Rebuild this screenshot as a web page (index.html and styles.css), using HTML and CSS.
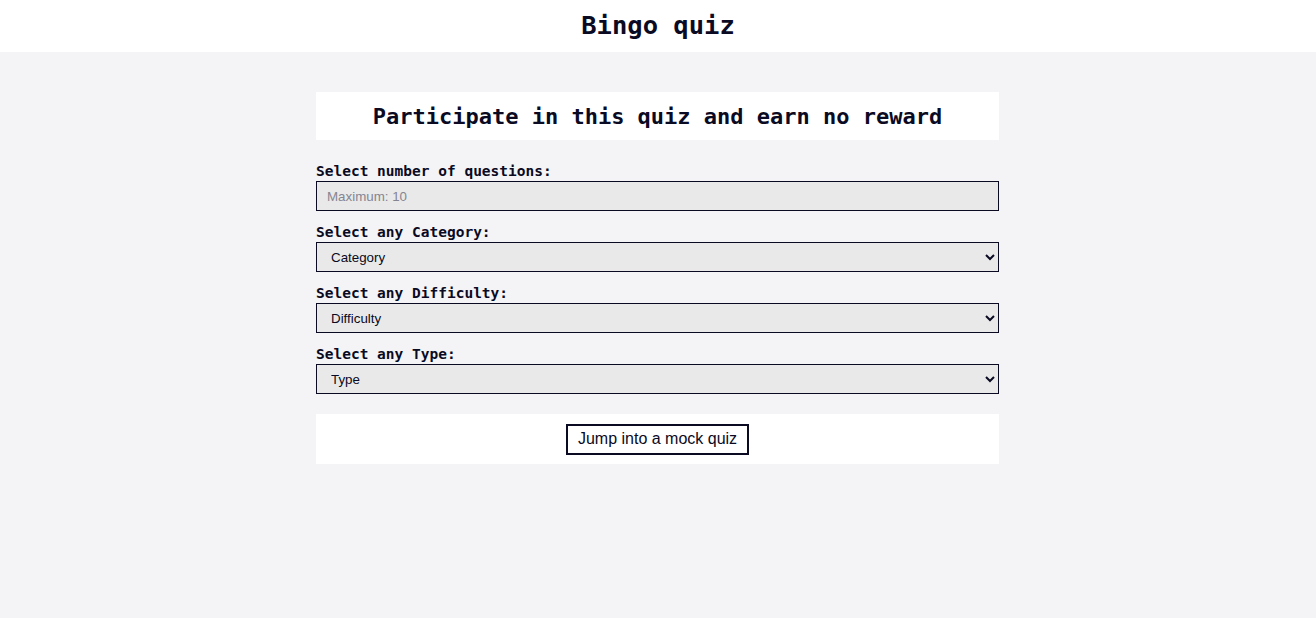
FILE: index.html
```html
<!DOCTYPE html>
<html lang="en">
<head>
<meta charset="utf-8">
<title>Bingo quiz</title>
<link rel="stylesheet" href="styles.css">
</head>
<body>
<header class="top">
  <h1 class="title">Bingo quiz</h1>
</header>
<main class="wrap">
  <form class="quiz">
    <h2 class="intro">Participate in this quiz and earn no reward</h2>
    <div class="field">
      <label class="lbl" for="num">Select number of questions:</label>
      <input class="ctrl input" id="num" type="number" placeholder="Maximum: 10">
    </div>
    <div class="field">
      <label class="lbl" for="cat">Select any Category:</label>
      <select class="ctrl sel" id="cat"><option>Category</option></select>
    </div>
    <div class="field">
      <label class="lbl" for="dif">Select any Difficulty:</label>
      <select class="ctrl sel" id="dif"><option>Difficulty</option></select>
    </div>
    <div class="field">
      <label class="lbl" for="typ">Select any Type:</label>
      <select class="ctrl sel" id="typ"><option>Type</option></select>
    </div>
    <div class="actions">
      <button class="btn" type="button">Jump into a mock quiz</button>
    </div>
  </form>
</main>
</body>
</html>
```
FILE: styles.css
```css
* { box-sizing: border-box; }
html, body { margin: 0; padding: 0; }
body {
  background: #f4f4f6;
  color: #0a0a23;
  font-family: "DejaVu Sans Mono", "Liberation Mono", monospace;
  min-height: 618px;
}
.top {
  background: #ffffff;
  height: 52px;
  display: flex;
  align-items: center;
  justify-content: center;
}
.title {
  margin: 0;
  font-size: 25.5px;
  font-weight: bold;
  line-height: 1;
}
.wrap {
  display: flex;
  justify-content: center;
  padding-top: 40px;
  padding-right: 1px;
}
.quiz {
  width: 683px;
  display: flex;
  flex-direction: column;
}
.intro {
  margin: 0 0 10px;
  background: #ffffff;
  height: 48px;
  display: flex;
  align-items: center;
  justify-content: center;
  font-size: 22px;
  font-weight: bold;
}
.field {
  display: flex;
  flex-direction: column;
  margin-top: 12px;
}
.lbl {
  font-size: 14.5px;
  font-weight: bold;
  line-height: 19px;
  height: 19px;
}
.ctrl {
  width: 100%;
  height: 30px;
  margin: 0;
  border: 1px solid #0a0a23;
  border-radius: 0;
  background-color: #e9e9e9;
  color: #0a0a23;
  font-family: "Liberation Sans", Arial, sans-serif;
}
.input {
  font-size: 13.33px;
  padding: 0 10px;
}
.input::placeholder { color: #858591; }
.sel {
  font-size: 13.33px;
  padding: 0 10px;
}
.actions {
  margin-top: 20px;
  background: #ffffff;
  height: 50px;
  display: flex;
  align-items: center;
  justify-content: center;
}
.btn {
  font-family: "Liberation Sans", Arial, sans-serif;
  font-size: 16px;
  color: #0a0a23;
  background: #ffffff;
  border: 2px solid #0a0a23;
  height: 31px;
  padding: 0 10px;
  cursor: pointer;
}
```
